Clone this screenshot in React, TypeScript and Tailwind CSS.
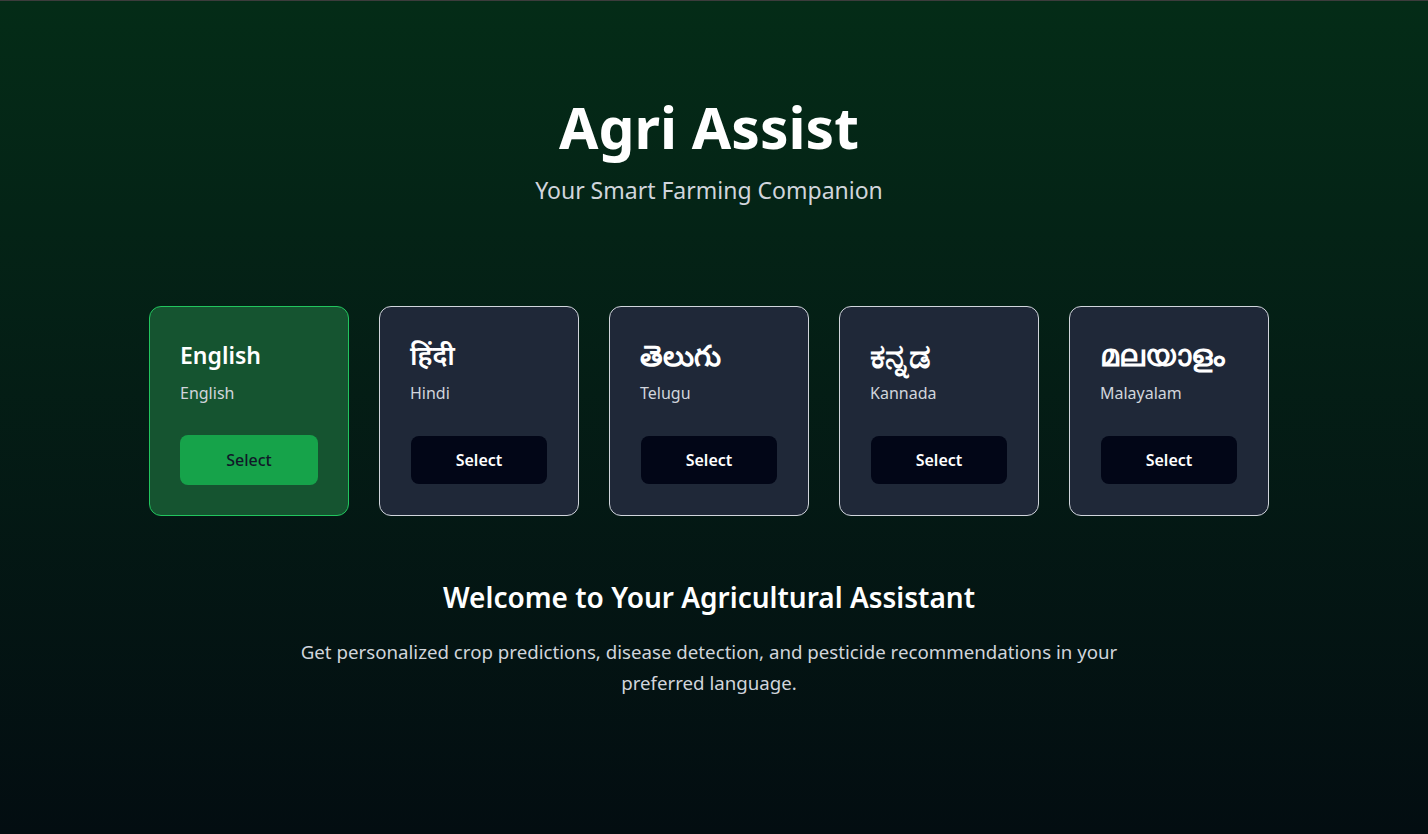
const languages = [
    { native: "English", name: "English", size: "text-[23px]" },
    { native: "हिंदी", name: "Hindi", size: "text-[27px]" },
    { native: "తెలుగు", name: "Telugu", size: "text-[29px]" },
    { native: "ಕನ್ನಡ", name: "Kannada", size: "text-[34px]" },
    { native: "മലയാളം", name: "Malayalam", size: "text-[30px]" },
];

export default function App() {
    const selected = "English";

    return (
        <div
            className="min-h-[834px] border-t border-[#3c3c3c] bg-gradient-to-b from-[#042c17] to-[#030d11] pr-[10px] text-white"
            style={{ fontFamily: '"Noto Sans", "Open Sans", sans-serif' }}
        >
            <div className="mx-auto flex max-w-6xl flex-col items-center px-6">
                <header className="pt-[88px] text-center">
                    <h1 className="text-[57px] font-bold leading-[76px]">
                        Agri Assist
                    </h1>
                    <p className="mt-[8px] text-[23px] text-gray-300">
                        Your Smart Farming Companion
                    </p>
                </header>

                <div className="mt-[98px] flex gap-[30px]">
                    {languages.map((lang) => {
                        const active = lang.name === selected;
                        return (
                            <div
                                key={lang.name}
                                className={
                                    active
                                        ? "flex h-[210px] w-[200px] flex-col rounded-xl border border-[#22c55e] bg-[#155430] px-[30px] pt-[32px]"
                                        : "flex h-[210px] w-[200px] flex-col rounded-xl border border-gray-300 bg-[#1f2838] px-[30px] pt-[32px]"
                                }
                            >
                                <h3
                                    className={`${lang.size} h-[32px] font-semibold leading-[32px] whitespace-nowrap`}
                                >
                                    {lang.native}
                                </h3>
                                <p className="mt-[10px] text-[16px] leading-[24px] text-gray-300">
                                    {lang.name}
                                </p>
                                <button
                                    className={
                                        active
                                            ? "mt-[30px] h-[50px] w-[138px] rounded-lg bg-[#16a34a] text-[16px] font-medium text-gray-900"
                                            : "mt-[31px] ml-[1px] h-[48px] w-[136px] rounded-lg bg-[#020617] text-[16px] font-semibold text-white"
                                    }
                                >
                                    Select
                                </button>
                            </div>
                        );
                    })}
                </div>

                <section className="mt-[61px] max-w-[840px] text-center">
                    <h2 className="text-[28px] font-semibold leading-[40px]">
                        Welcome to Your Agricultural Assistant
                    </h2>
                    <p className="mt-[19px] text-[18.7px] leading-[31px] text-gray-300">
                        Get personalized crop predictions, disease detection,
                        and pesticide recommendations in your preferred
                        language.
                    </p>
                </section>
            </div>
        </div>
    );
}
